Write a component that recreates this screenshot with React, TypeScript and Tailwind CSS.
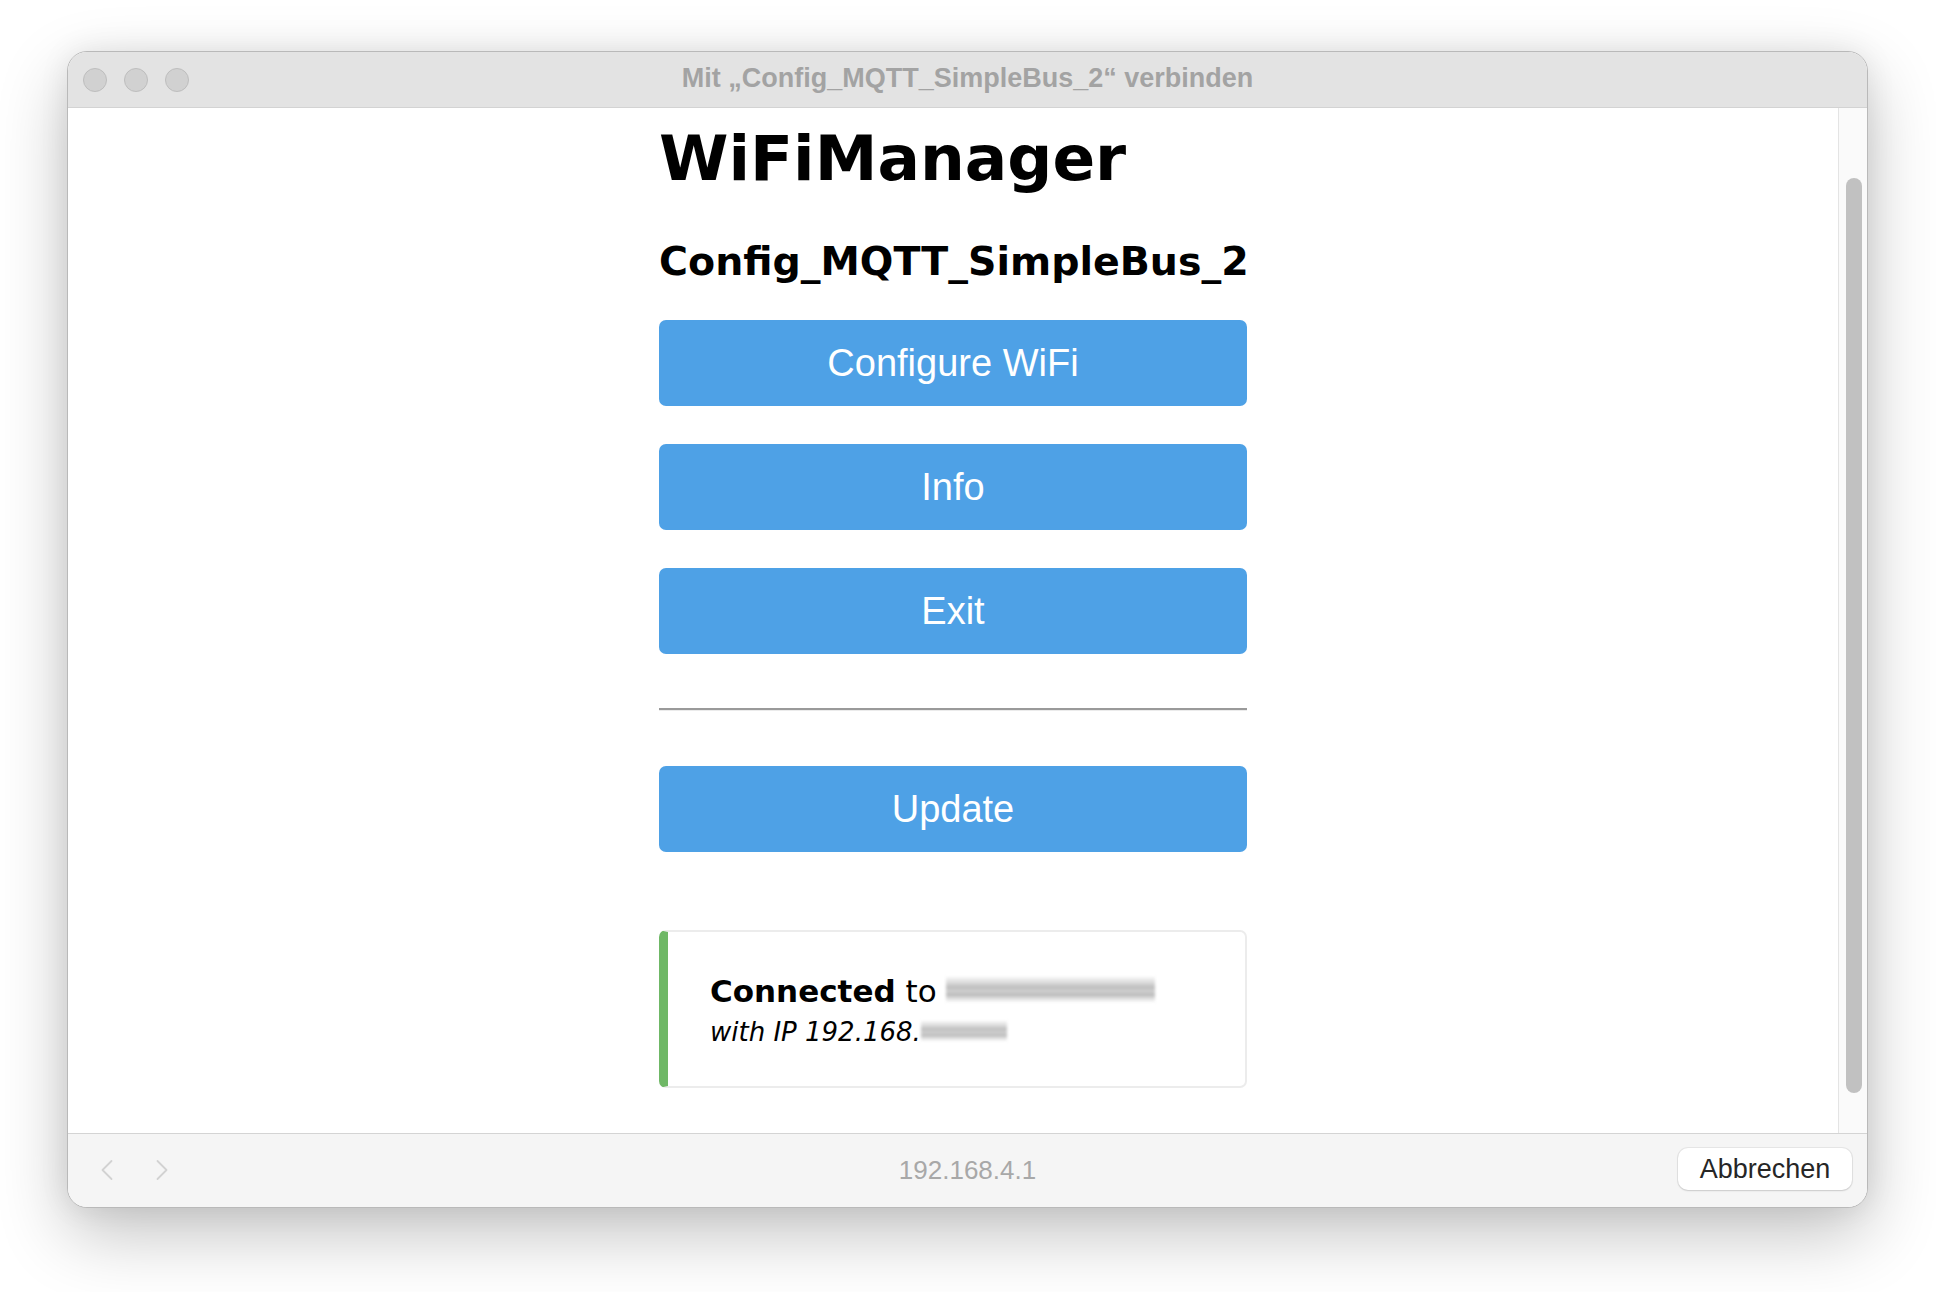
import { ChevronLeft, ChevronRight } from "lucide-react";

const MENU = ["Configure WiFi", "Info", "Exit"];

function Blurred({ width, height }: { width: number; height: number }) {
  // redacted text, drawn as a soft grey smear
  return (
    <span
      className="inline-block align-baseline bg-[linear-gradient(to_bottom,#f6f6f6_0%,#dcdcdc_22%,#bcbcbc_42%,#d2d2d2_58%,#b8b8b8_70%,#e4e4e4_88%,#f8f8f8_100%)] blur-[1.5px]"
      style={{ width, height }}
    />
  );
}

function MenuButton({ label }: { label: string }) {
  return (
    <button className="w-full h-[86px] rounded-[7px] bg-[#4ea1e6] text-white text-[38px] font-['Liberation_Sans',Arial,sans-serif] leading-none">
      {label}
    </button>
  );
}

export default function App() {
  return (
    <div className="w-[1936px] h-[1292px] bg-white pt-[51px] pl-[67px] font-['Liberation_Sans',Arial,sans-serif]">
      <div className="w-[1801px] h-[1157px] flex flex-col rounded-[20px] overflow-hidden border border-[#b9b9b9] shadow-[0_26px_70px_rgba(0,0,0,0.24),0_0_30px_rgba(0,0,0,0.08)] bg-white">
        {/* title bar */}
        <div className="h-[56px] shrink-0 grid grid-cols-[1fr_auto_1fr] items-center bg-[#e3e3e3] border-b border-[#d3d3d3]">
          <div className="flex items-center gap-[17px] pl-[15px]">
            <span className="w-[24px] h-[24px] rounded-full bg-[#d1d1d1] border border-[#bdbdbd]" />
            <span className="w-[24px] h-[24px] rounded-full bg-[#d1d1d1] border border-[#bdbdbd]" />
            <span className="w-[24px] h-[24px] rounded-full bg-[#d1d1d1] border border-[#bdbdbd]" />
          </div>
          <div className="text-[27px] font-bold text-[#a3a3a3] leading-none -mt-[2px]">
            Mit „Config_MQTT_SimpleBus_2“ verbinden
          </div>
          <div />
        </div>

        {/* page */}
        <div className="flex-1 flex min-h-0">
          <div className="flex-1 flex justify-center font-['DejaVu_Sans',Verdana,sans-serif] text-black">
            <div className="w-[588px]">
              <h1 className="mt-[19px] text-[63px] font-bold leading-none">WiFiManager</h1>
              <h3 className="mt-[52px] text-[39.5px] font-bold leading-none">Config_MQTT_SimpleBus_2</h3>

              <div className="mt-[38px] flex flex-col gap-[38px]">
                {MENU.map((label) => (
                  <MenuButton key={label} label={label} />
                ))}
              </div>

              <hr className="mt-[54px] h-[3px] border-0 border-t-2 border-b border-t-[#9a9a9a] border-b-[#ebebeb]" />

              <div className="mt-[55px]">
                <MenuButton label="Update" />
              </div>

              <div className="mt-[78px] h-[158px] rounded-[7px] border-2 border-[#ececec] border-l-[9px] border-l-[#6fb866] pl-[42px] pt-[40px]">
                <div className="text-[31px] leading-[38px] whitespace-nowrap">
                  <strong className="font-bold">Connected</strong> to <Blurred width={209} height={25} />
                </div>
                <div className="mt-[7px] text-[26px] leading-[30px] italic whitespace-nowrap">
                  with IP 192.168.<Blurred width={86} height={20} />
                </div>
              </div>
            </div>
          </div>

          {/* scrollbar */}
          <div className="w-[29px] shrink-0 bg-[#fafafa] border-l border-[#e4e4e4] pt-[70px] pb-[40px] pl-[7px]">
            <div className="w-[16px] h-full rounded-full bg-[#c1c1c1]" />
          </div>
        </div>

        {/* bottom bar */}
        <div className="h-[74px] shrink-0 grid grid-cols-[1fr_auto_1fr] items-center bg-[#f5f5f5] border-t border-[#d4d4d4]">
          <div className="flex items-center gap-[19px] pl-[21px] -mt-[2px] text-[#d2d2d2]">
            <ChevronLeft size={36} strokeWidth={1.2} />
            <ChevronRight size={36} strokeWidth={1.2} />
          </div>
          <div className="text-[26px] text-[#a8a8a8] leading-none -mt-[2px]">192.168.4.1</div>
          <div className="flex justify-end pr-[15px] -mt-[3px]">
            <button className="w-[174px] h-[42px] rounded-[10px] bg-white text-[27px] text-[#262626] leading-none shadow-[0_0_0_1px_rgba(0,0,0,0.06),0_1px_2px_rgba(0,0,0,0.12)]">
              Abbrechen
            </button>
          </div>
        </div>
      </div>
    </div>
  );
}
